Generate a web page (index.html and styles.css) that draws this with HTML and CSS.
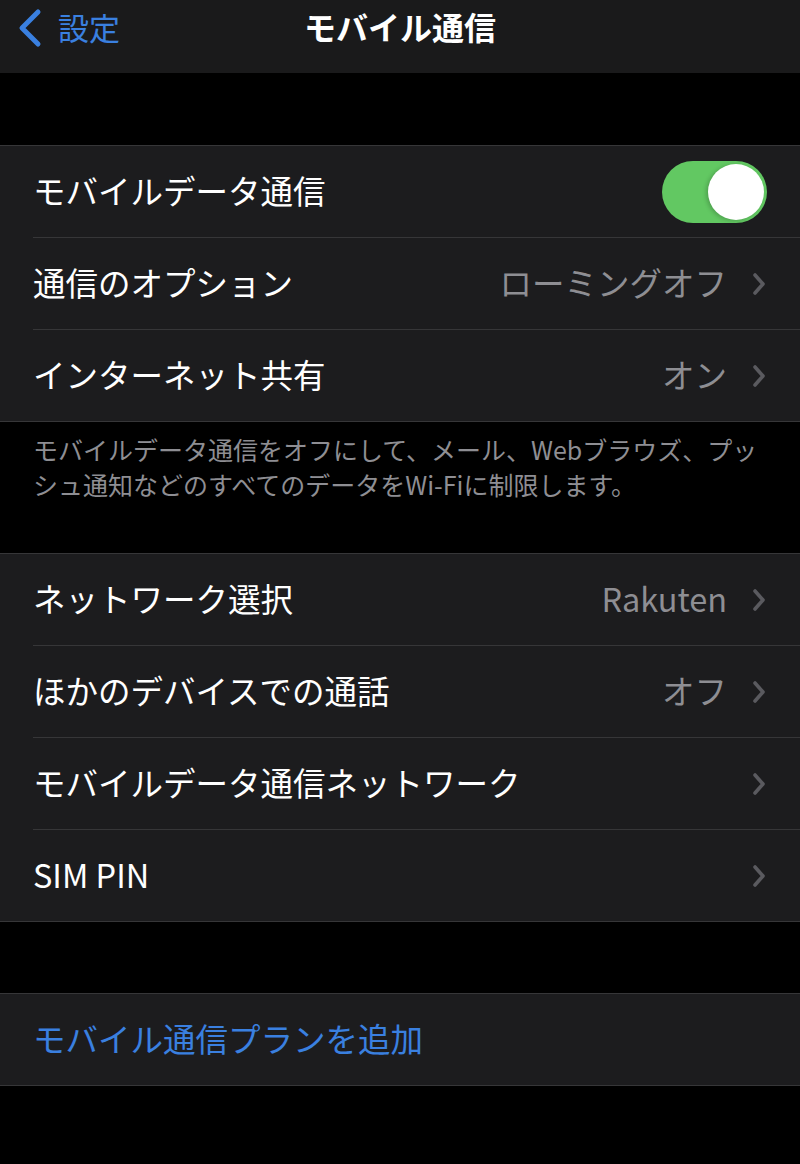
FILE: index.html
```html
<!DOCTYPE html>
<html lang="ja">
<head>
<meta charset="utf-8">
<title>モバイル通信</title>
<link rel="stylesheet" href="styles.css">
</head>
<body>
<header class="nav">
  <div class="back">
    <svg class="back-chev" width="28" height="40" viewBox="0 0 28 40"><path d="M22 4 L6 20 L22 36" fill="none" stroke="#3a80e0" stroke-width="5" stroke-linecap="round" stroke-linejoin="round"/></svg>
    <span class="back-label">設定</span>
  </div>
  <h1 class="title">モバイル通信</h1>
</header>

<section class="group first">
  <div class="row"><div class="inner">
    <span class="label">モバイルデータ通信</span>
    <span class="toggle"><span class="knob"></span></span>
  </div></div>
  <div class="row"><div class="inner">
    <span class="label">通信のオプション</span>
    <span class="value">ローミングオフ</span>
    <svg class="chev" width="14" height="24" viewBox="0 0 14 24"><path d="M3 3 L11 12 L3 21" fill="none" stroke="#5a5a5f" stroke-width="3.6" stroke-linecap="round" stroke-linejoin="round"/></svg>
  </div></div>
  <div class="row last"><div class="inner">
    <span class="label">インターネット共有</span>
    <span class="value">オン</span>
    <svg class="chev" width="14" height="24" viewBox="0 0 14 24"><path d="M3 3 L11 12 L3 21" fill="none" stroke="#5a5a5f" stroke-width="3.6" stroke-linecap="round" stroke-linejoin="round"/></svg>
  </div></div>
</section>
<p class="footer">モバイルデータ通信をオフにして、メール、Webブラウズ、プッ<br>シュ通知などのすべてのデータをWi-Fiに制限します。</p>

<section class="group">
  <div class="row"><div class="inner">
    <span class="label">ネットワーク選択</span>
    <span class="value latin">Rakuten</span>
    <svg class="chev" width="14" height="24" viewBox="0 0 14 24"><path d="M3 3 L11 12 L3 21" fill="none" stroke="#5a5a5f" stroke-width="3.6" stroke-linecap="round" stroke-linejoin="round"/></svg>
  </div></div>
  <div class="row"><div class="inner">
    <span class="label">ほかのデバイスでの通話</span>
    <span class="value">オフ</span>
    <svg class="chev" width="14" height="24" viewBox="0 0 14 24"><path d="M3 3 L11 12 L3 21" fill="none" stroke="#5a5a5f" stroke-width="3.6" stroke-linecap="round" stroke-linejoin="round"/></svg>
  </div></div>
  <div class="row"><div class="inner">
    <span class="label">モバイルデータ通信ネットワーク</span>
    <span class="value"></span>
    <svg class="chev" width="14" height="24" viewBox="0 0 14 24"><path d="M3 3 L11 12 L3 21" fill="none" stroke="#5a5a5f" stroke-width="3.6" stroke-linecap="round" stroke-linejoin="round"/></svg>
  </div></div>
  <div class="row last"><div class="inner">
    <span class="label latin">SIM PIN</span>
    <span class="value"></span>
    <svg class="chev" width="14" height="24" viewBox="0 0 14 24"><path d="M3 3 L11 12 L3 21" fill="none" stroke="#5a5a5f" stroke-width="3.6" stroke-linecap="round" stroke-linejoin="round"/></svg>
  </div></div>
</section>

<section class="group third">
  <div class="row last"><div class="inner">
    <span class="label link">モバイル通信プランを追加</span>
  </div></div>
</section>
</body>
</html>
```

FILE: styles.css
```css
* { box-sizing: border-box; }
html, body {
  margin: 0;
  padding: 0;
  background: #000;
}
body {
  width: 800px;
  min-height: 1164px;
  font-family: "Noto Sans CJK JP", "Noto Sans", sans-serif;
  color: #fff;
}
.nav {
  height: 73px;
  background: #1a1a1b;
  display: grid;
  grid-template-columns: 1fr auto 1fr;
  align-items: center;
  padding-bottom: 18px;
}
.back {
  grid-column: 1;
  grid-row: 1;
  display: flex;
  align-items: center;
  padding-left: 16px;
  gap: 14px;
  color: #3a80e0;
}
.back-label {
  font-size: 31px;
  line-height: 1;
  padding-bottom: 2px;
}
.title {
  grid-column: 2;
  grid-row: 1;
  margin: 0;
  font-size: 32px;
  font-weight: 700;
  line-height: 1;
  padding-bottom: 3px;
}
.group {
  background: #1c1c1e;
  border-top: 1px solid #363638;
  border-bottom: 1px solid #363638;
}
.group.first { margin-top: 72px; }
.group.third { margin-top: 71px; }
.row {
  padding-left: 33px;
}
.inner {
  height: 92px;
  display: flex;
  align-items: center;
  border-bottom: 1px solid #363638;
  padding-right: 33px;
}
.row.last .inner {
  height: 91px;
  border-bottom: none;
}
.label {
  font-size: 32.5px;
  line-height: 1;
  flex: 1;
  white-space: nowrap;
  padding-bottom: 2px;
}
.link { color: #3a80e0; }
.value {
  font-size: 32.5px;
  line-height: 1;
  color: #8e8e93;
  margin-right: 25px;
  white-space: nowrap;
  padding-bottom: 2px;
}
.chev {
  margin-right: 1px;
  flex: none;
}
.toggle {
  width: 105px;
  height: 62px;
  border-radius: 31px;
  background: #62c862;
  display: flex;
  align-items: center;
  justify-content: flex-end;
  padding-right: 3px;
}
.knob {
  width: 56px;
  height: 56px;
  border-radius: 50%;
  background: #fff;
  box-shadow: -2px 1px 4px rgba(0,0,0,0.2);
}
.footer {
  margin: 0;
  padding: 10px 33px 51px;
  font-size: 25px;
  line-height: 35px;
  color: #8e8e93;
  white-space: nowrap;
}
```
